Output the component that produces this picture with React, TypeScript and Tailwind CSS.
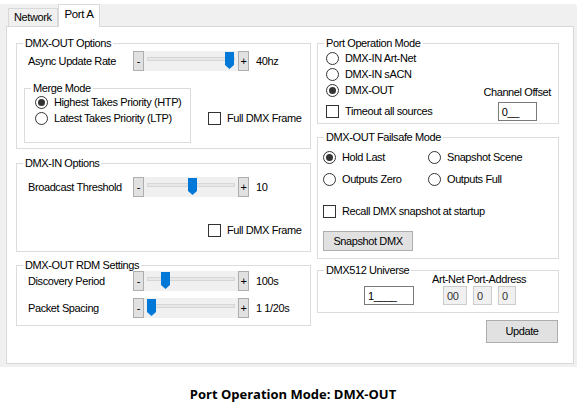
import type { ReactNode } from "react";

function Group({ title, className, children }: { title: string; className: string; children: ReactNode }) {
  return (
    <fieldset className={`border border-[#dcdcdc] ${className}`}>
      <legend className="ml-[6px] px-[2px] leading-[14px]">{title}</legend>
      {children}
    </fieldset>
  );
}

function Radio({ label, checked }: { label: string; checked?: boolean }) {
  return (
    <div className="flex h-[14px] items-center whitespace-nowrap">
      <span className="flex h-[13px] w-[13px] items-center justify-center rounded-full border border-[#333333] bg-white">
        {checked && <span className="h-[7px] w-[7px] rounded-full bg-[#333333]" />}
      </span>
      <span className="ml-[6px] leading-[14px]">{label}</span>
    </div>
  );
}

function Check({ label }: { label: string }) {
  return (
    <div className="flex h-[14px] items-center whitespace-nowrap">
      <span className="h-[13px] w-[13px] border border-[#333333] bg-white" />
      <span className="ml-[6px] leading-[14px]">{label}</span>
    </div>
  );
}

function StepButton({ label }: { label: string }) {
  return (
    <span className="flex h-full w-[11px] items-center justify-center border border-[#adadad] bg-[#e1e1e1] text-[11px] leading-none">
      {label}
    </span>
  );
}

function Slider({ pos, value }: { pos: number; value: string }) {
  return (
    <div className="flex items-center">
      <div className="flex h-[20px]">
        <StepButton label="-" />
        <div className="relative h-full w-[94px] bg-[#f0f0f0]">
          <div className="absolute left-[3px] right-[3px] top-[6px] h-[4px] border border-[#d6d6d6] bg-[#e7e7e7]" />
          <svg className="absolute top-[1px]" style={{ left: pos }} width="9" height="17" viewBox="0 0 9 17">
            <path d="M0 0H9V13L4.5 17L0 13Z" fill="#0078d7" />
          </svg>
        </div>
        <StepButton label="+" />
      </div>
      <span className="ml-[7px] whitespace-nowrap leading-[14px]">{value}</span>
    </div>
  );
}

function TextBox({ value, className, disabled }: { value: string; className: string; disabled?: boolean }) {
  return (
    <div
      className={`flex h-[19px] items-center pl-[3px] leading-[14px] ${
        disabled ? "border border-[#cccccc] bg-[#f0f0f0] text-[#333333]" : "border border-[#7a7a7a] bg-white"
      } ${className}`}
    >
      {value}
    </div>
  );
}

function SliderRow({ label, pos, value, className }: { label: string; pos: number; value: string; className: string }) {
  return (
    <div className={`flex items-center pl-[11px] ${className}`}>
      <span className="w-[105px] whitespace-nowrap leading-[14px]">{label}</span>
      <Slider pos={pos} value={value} />
    </div>
  );
}

export default function App() {
  return (
    <div className="h-[403px] w-[580px] bg-white pt-[4px] font-['Liberation_Sans',Arial,sans-serif] text-[11px] tracking-[-0.4px] text-black">
      <div className="flex h-[363px] w-[577px] flex-col rounded-tr-[3px] bg-[#f0f0f0]">
        {/* tabs */}
        <div className="relative z-10 flex h-[22px] items-end pl-[8px]">
          <div className="flex h-[18px] items-center border border-b-0 border-[#d9d9d9] bg-[#f0f0f0] px-[5px]">Network</div>
          <div className="-mb-[1px] flex h-[23px] items-center border border-b-0 border-[#d9d9d9] bg-white px-[6px] pb-[2px] text-[11.5px]">
            Port A
          </div>
        </div>

        {/* tab page */}
        <div className="ml-[6px] flex h-[338px] w-[568px] border border-[#d9d9d9] bg-white pl-[9px] pt-[9px]">
          {/* left column */}
          <div className="flex w-[295px] flex-col">
            <Group title="DMX-OUT Options" className="h-[113px] w-[295px]">
              <SliderRow label="Async Update Rate" pos={81} value="40hz" className="mt-[1px]" />
              <div className="mt-[10px] flex pl-[7px]">
                <Group title="Merge Mode" className="h-[62px] w-[167px]">
                  <div className="flex flex-col gap-[2px] pl-[10px]">
                    <Radio checked label="Highest Takes Priority (HTP)" />
                    <Radio label="Latest Takes Priority (LTP)" />
                  </div>
                </Group>
                <div className="ml-[17px] mt-[30px]">
                  <Check label="Full DMX Frame" />
                </div>
              </div>
            </Group>

            <Group title="DMX-IN Options" className="mt-[7px] h-[96px] w-[295px]">
              <SliderRow label="Broadcast Threshold" pos={44} value="10" className="mt-[7px]" />
              <div className="ml-[191px] mt-[26px]">
                <Check label="Full DMX Frame" />
              </div>
            </Group>

            <Group title="DMX-OUT RDM Settings" className="mt-[6px] h-[68px] w-[295px]">
              <SliderRow label="Discovery Period" pos={17} value="100s" className="-mt-[1px]" />
              <SliderRow label="Packet Spacing" pos={3} value="1 1/20s" className="mt-[7px]" />
            </Group>
          </div>

          {/* right column */}
          <div className="ml-[6px] flex w-[242px] flex-col">
            <Group title="Port Operation Mode" className="h-[88px] w-[242px]">
              <div className="flex">
                <div className="flex flex-col pl-[8px] pt-[1px]">
                  <div className="flex flex-col gap-[2px]">
                    <Radio label="DMX-IN Art-Net" />
                    <Radio label="DMX-IN sACN" />
                    <Radio checked label="DMX-OUT" />
                  </div>
                  <div className="mt-[7px]">
                    <Check label="Timeout all sources" />
                  </div>
                </div>
                <div className="ml-auto mr-[7px] mt-[35px] flex flex-col items-center">
                  <span className="whitespace-nowrap leading-[14px]">Channel Offset</span>
                  <TextBox value="0__" className="mt-[3px] w-[39px]" />
                </div>
              </div>
            </Group>

            <Group title="DMX-OUT Failsafe Mode" className="mt-[6px] h-[129px] w-[242px]">
              <div className="pl-[5px] pt-[6px]">
                <div className="grid grid-cols-[105px_auto] gap-y-[8px]">
                  <Radio checked label="Hold Last" />
                  <Radio label="Snapshot Scene" />
                  <Radio label="Outputs Zero" />
                  <Radio label="Outputs Full" />
                </div>
                <div className="mt-[18px]">
                  <Check label="Recall DMX snapshot at startup" />
                </div>
                <button className="mt-[13px] flex h-[20px] w-[90px] items-center justify-center border border-[#adadad] bg-[#e1e1e1]">
                  Snapshot DMX
                </button>
              </div>
            </Group>

            <Group title="DMX512 Universe" className="mt-[4px] h-[50px] w-[242px]">
              <div className="-mt-[5px] flex items-end pl-[46px]">
                <TextBox value="1____" className="w-[50px]" />
                <div className="ml-[18px] flex flex-col">
                  <span className="whitespace-nowrap leading-[14px]">Art-Net Port-Address</span>
                  <div className="flex gap-[6px] pl-[11px]">
                    <TextBox disabled value="00" className="w-[24px]" />
                    <TextBox disabled value="0" className="w-[19px]" />
                    <TextBox disabled value="0" className="w-[18px]" />
                  </div>
                </div>
              </div>
            </Group>

            <button className="mr-[1px] mt-[7px] flex h-[23px] w-[72px] items-center justify-center self-end border border-[#adadad] bg-[#e1e1e1]">
              Update
            </button>
          </div>
        </div>
      </div>

      <p className="mt-[19px] pl-[6px] text-center font-['Open_Sans',sans-serif] text-[13px] font-bold leading-[16px] tracking-normal text-black">
        Port Operation Mode: DMX-OUT
      </p>
    </div>
  );
}
